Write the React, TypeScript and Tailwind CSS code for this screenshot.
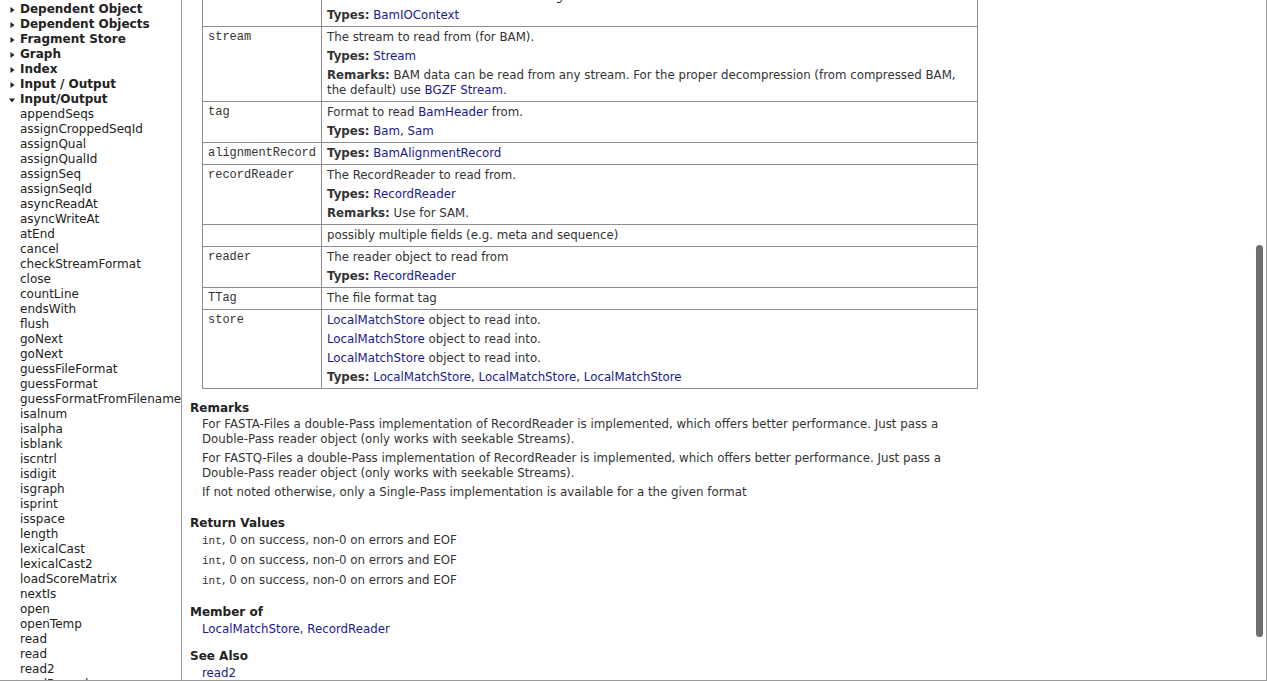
import type { ReactNode } from 'react';

const sans = "font-['DejaVu_Sans',Verdana,sans-serif]";
const mono = "font-['Liberation_Mono','Courier_New',monospace]";

const groups = ['Dependent Object', 'Dependent Objects', 'Fragment Store', 'Graph', 'Index', 'Input / Output'];
const items = [
    'appendSeqs', 'assignCroppedSeqId', 'assignQual', 'assignQualId', 'assignSeq', 'assignSeqId', 'asyncReadAt',
    'asyncWriteAt', 'atEnd', 'cancel', 'checkStreamFormat', 'close', 'countLine', 'endsWith', 'flush', 'goNext',
    'goNext', 'guessFileFormat', 'guessFormat', 'guessFormatFromFilename', 'isalnum', 'isalpha', 'isblank', 'iscntrl',
    'isdigit', 'isgraph', 'isprint', 'isspace', 'length', 'lexicalCast', 'lexicalCast2', 'loadScoreMatrix', 'nextIs',
    'open', 'openTemp', 'read', 'read', 'read2', 'readRecord',
];

function A({ children }: { children: ReactNode }) {
    return <span className="text-[#1a1a8c]">{children}</span>;
}

function P({ children }: { children: ReactNode }) {
    return <p className="mb-[4px] leading-[15px]">{children}</p>;
}

function Types({ children }: { children: ReactNode }) {
    return <P><b className="font-bold">Types:</b> {children}</P>;
}

function Tri({ open }: { open?: boolean }) {
    return (
        <svg width="8" height="8" viewBox="0 0 8 8" className="mr-[4px] shrink-0">
            {open ? <path d="M1 2.5h6L4 6.5z" fill="#222" /> : <path d="M2.5 1v6L6.5 4z" fill="#222" />}
        </svg>
    );
}

const rows: { name: string; body: ReactNode }[] = [
    { name: 'context', body: <><P>The <A>BamIOContext</A> to use when reading the BAM file.</P><Types><A>BamIOContext</A></Types></> },
    {
        name: 'stream', body: <>
            <P>The stream to read from (for BAM).</P>
            <Types><A>Stream</A></Types>
            <P><b className="font-bold">Remarks:</b> BAM data can be read from any stream. For the proper decompression (from compressed BAM, the default) use <A>BGZF Stream</A>.</P>
        </>,
    },
    { name: 'tag', body: <><P>Format to read <A>BamHeader</A> from.</P><Types><A>Bam</A>, <A>Sam</A></Types></> },
    { name: 'alignmentRecord', body: <Types><A>BamAlignmentRecord</A></Types> },
    {
        name: 'recordReader', body: <>
            <P>The RecordReader to read from.</P>
            <Types><A>RecordReader</A></Types>
            <P><b className="font-bold">Remarks:</b> Use for SAM.</P>
        </>,
    },
    { name: '', body: <P>possibly multiple fields (e.g. meta and sequence)</P> },
    { name: 'reader', body: <><P>The reader object to read from</P><Types><A>RecordReader</A></Types></> },
    { name: 'TTag', body: <P>The file format tag</P> },
    {
        name: 'store', body: <>
            <P><A>LocalMatchStore</A> object to read into.</P>
            <P><A>LocalMatchStore</A> object to read into.</P>
            <P><A>LocalMatchStore</A> object to read into.</P>
            <Types><A>LocalMatchStore</A>, <A>LocalMatchStore</A>, <A>LocalMatchStore</A></Types>
        </>,
    },
];

function Section({ title, className, children }: { title: string; className: string; children: ReactNode }) {
    return (
        <div className={className}>
            <div className="mb-[1px] font-bold text-[12px] leading-[16px] text-[#222]">{title}</div>
            <div className="pl-[12px] w-[788px]">{children}</div>
        </div>
    );
}

export default function App() {
    const ret = (
        <p className="mb-[4px] h-[16px] leading-[16px]">
            <code className={`${mono} text-[11px] leading-[16px] text-[#333]`}>int</code>, 0 on success, non-0 on errors and EOF
        </p>
    );
    return (
        <div className={`${sans} relative flex h-[681px] w-[1267px] overflow-hidden bg-white border-r border-b border-[#9a9a9a]`}>
            {/* sidebar */}
            <div className="w-[182px] shrink-0 overflow-hidden border-r border-[#9a9a9a] pt-[2px] text-[12px] leading-[15px] text-[#222]">
                {groups.map((g) => (
                    <div key={g} className="flex items-center pl-[8px] h-[15px] font-bold whitespace-nowrap">
                        <Tri />{g}
                    </div>
                ))}
                <div className="flex items-center pl-[8px] h-[15px] font-bold whitespace-nowrap">
                    <Tri open />Input/Output
                </div>
                {items.map((it, i) => (
                    <div key={i} className="pl-[20px] h-[15px] whitespace-nowrap">{it}</div>
                ))}
            </div>

            {/* main */}
            <div className="flex-1 overflow-hidden pl-[8px] text-[11.8px] text-[#333]">
                <table className="ml-[12px] mt-[-15px] w-[776px] table-fixed border-collapse">
                    <colgroup>
                        <col className="w-[119px]" />
                        <col />
                    </colgroup>
                    <tbody>
                        {rows.map((r, i) => (
                            <tr key={i}>
                                <td className={`${mono} align-top border border-[#8e8e8e] px-[5px] pt-[3px] text-[12px] leading-[15px] text-[#333]`}>{r.name}</td>
                                <td className="align-top border border-[#8e8e8e] px-[5px] pt-[3px] [&>p:last-child]:mb-[3px]">{r.body}</td>
                            </tr>
                        ))}
                    </tbody>
                </table>

                <Section title="Remarks" className="mt-[11px]">
                    <P>For FASTA-Files a double-Pass implementation of RecordReader is implemented, which offers better performance. Just pass a Double-Pass reader object (only works with seekable Streams).</P>
                    <P>For FASTQ-Files a double-Pass implementation of RecordReader is implemented, which offers better performance. Just pass a Double-Pass reader object (only works with seekable Streams).</P>
                    <P>If not noted otherwise, only a Single-Pass implementation is available for a the given format</P>
                </Section>

                <Section title="Return Values" className="mt-[15px]">
                    {ret}
                    {ret}
                    {ret}
                </Section>

                <Section title="Member of" className="mt-[16px]">
                    <div className="leading-[16px]"><A>LocalMatchStore</A>, <A>RecordReader</A></div>
                </Section>

                <Section title="See Also" className="mt-[11px]">
                    <div className="leading-[16px]"><A>read2</A></div>
                </Section>
            </div>

            {/* overlay scrollbar */}
            <div className="absolute right-[3px] top-[245px] h-[392px] w-[7px] rounded-full bg-[#6d6d6d]" />
        </div>
    );
}
